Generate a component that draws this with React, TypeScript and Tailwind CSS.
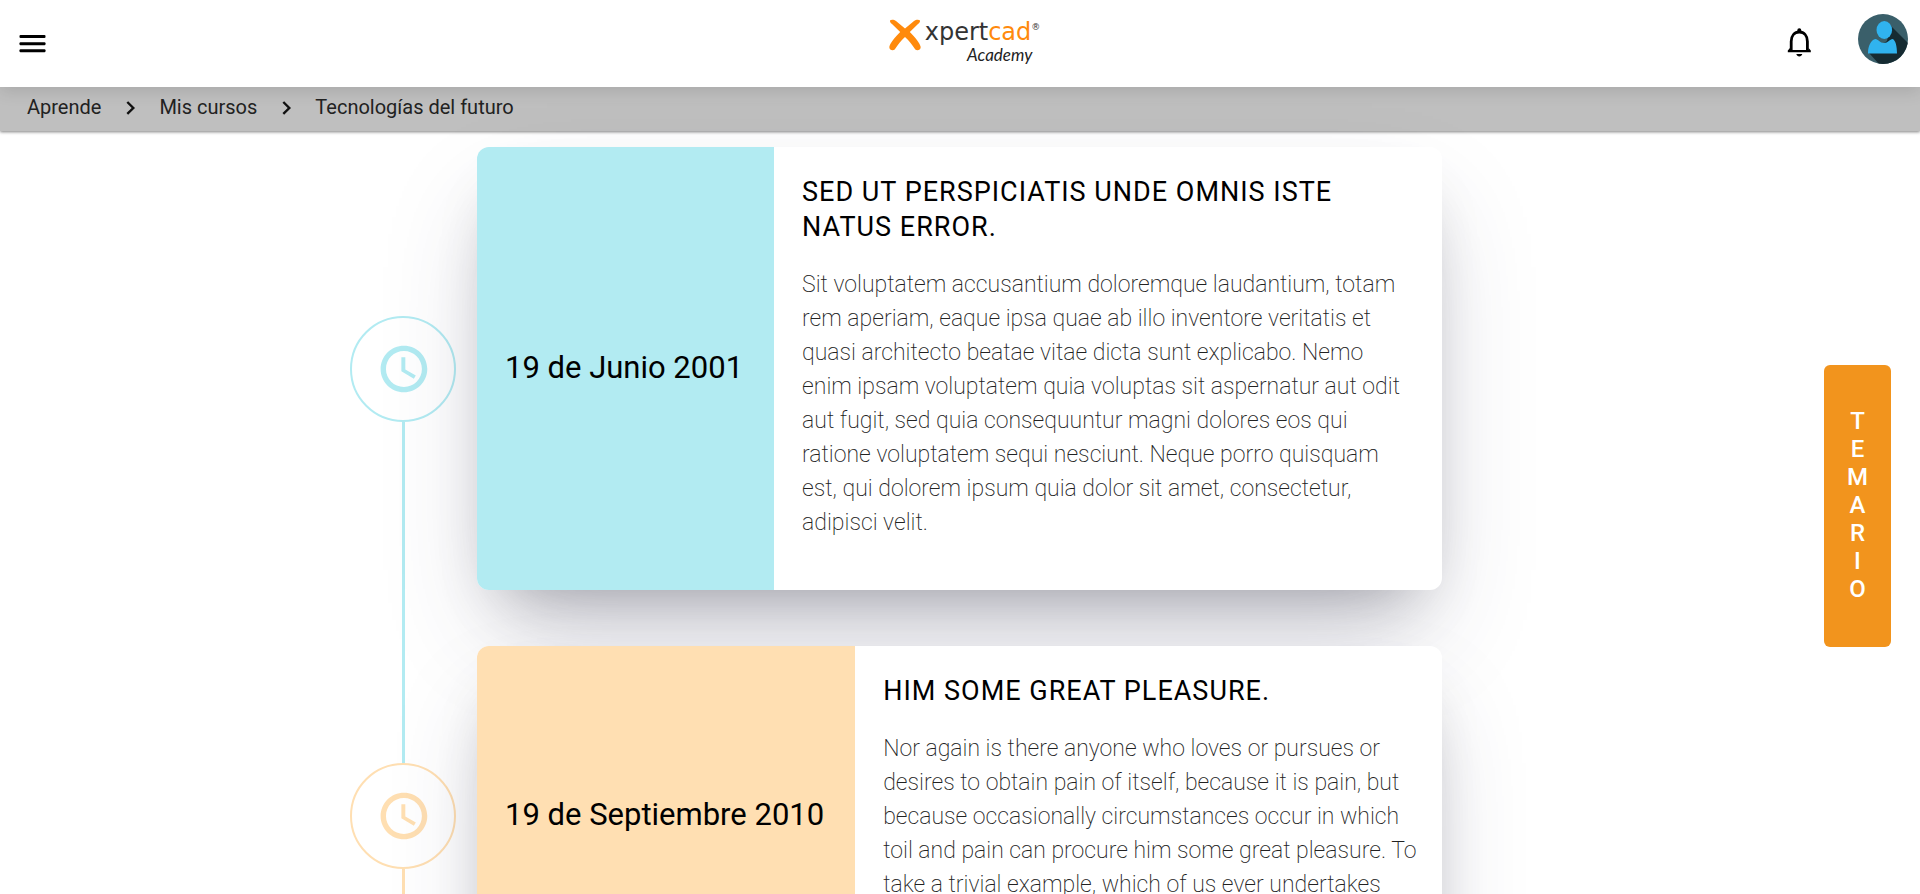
import React from "react";

type Tone = "cyan" | "orange";

interface Event {
  date: string;
  title: string;
  body: string;
  tone: Tone;
}

const events: Event[] = [
  {
    date: "19 de Junio 2001",
    title: "Sed ut perspiciatis unde omnis iste natus error.",
    body: "Sit voluptatem accusantium doloremque laudantium, totam rem aperiam, eaque ipsa quae ab illo inventore veritatis et quasi architecto beatae vitae dicta sunt explicabo. Nemo enim ipsam voluptatem quia voluptas sit aspernatur aut odit aut fugit, sed quia consequuntur magni dolores eos qui ratione voluptatem sequi nesciunt. Neque porro quisquam est, qui dolorem ipsum quia dolor sit amet, consectetur, adipisci velit.",
    tone: "cyan",
  },
  {
    date: "19 de Septiembre 2010",
    title: "Him some great pleasure.",
    body: "Nor again is there anyone who loves or pursues or desires to obtain pain of itself, because it is pain, but because occasionally circumstances occur in which toil and pain can procure him some great pleasure. To take a trivial example, which of us ever undertakes laborious physical exercise.",
    tone: "orange",
  },
];

const tones: Record<Tone, { fill: string; ring: string; icon: string }> = {
  cyan: { fill: "bg-[#b2ebf2]", ring: "border-[#b2ebf2]", icon: "text-[#b2ebf2]" },
  orange: { fill: "bg-[#ffdfb2]", ring: "border-[#ffdfb2]", icon: "text-[#ffdfb2]" },
};

function Clock({ className }: { className: string }) {
  return (
    <svg viewBox="-0.4 0 24 24" className={className} fill="currentColor" aria-hidden="true">
      <path d="M11.99 2C6.47 2 2 6.48 2 12s4.47 10 9.99 10C17.52 22 22 17.52 22 12S17.52 2 11.99 2zM12 19.700c-4.300 0-7.700-3.400-7.700-7.700s3.400-7.700 7.700-7.700 7.700 3.400 7.700 7.700-3.400 7.700-7.700 7.700zm.600-12.700H10.900v6l5.350 3.150.85-1.330-4.500-2.620z" />
    </svg>
  );
}

function Chevron() {
  return (
    <svg viewBox="-1 0 12 16" className="h-4 w-3" fill="none" stroke="#111" strokeWidth="2.4" aria-hidden="true">
      <path d="M2.300 3 8.300 9l-6 5.800" />
    </svg>
  );
}

function Logo() {
  return (
    <a href="#" aria-label="Xpertcad Academy" className="flex items-start gap-1 pl-[9px]">
      <svg viewBox="0 0 32 32" className="h-8 w-8" aria-hidden="true">
        <path
          d="M1 1.500C2 .3 5 .3 7 2L16 9.600 25 2C27 .3 30 .3 31 1.500 31.300 2.500 30.500 4 29 5L20.800 13C26 18.500 31 24 31.700 28 31.700 31.300 28 32 26.300 30.500 23 25.500 20 21.800 16 18 12 21.800 9 25.500 5.700 30.500 4 32 .3 31.300.3 28 1 24 6 18.500 11.200 13L3 5C1.500 4 .700 2.500 1 1.500Z"
          fill="#ff8a0c"
        />
      </svg>
      <span className="flex flex-col items-end">
        <span className="flex items-start font-['DejaVu_Sans',sans-serif] text-[24px] leading-[26px] text-[#333]">
          <span>xpert</span>
          <span className="text-[#ff8a0c]">cad</span>
          <span className="text-[9px] leading-[16px]">®</span>
        </span>
        <span className="pr-2 font-['Lato',sans-serif] text-[17px] leading-[20px] text-[#222] italic">
          Academy
        </span>
      </span>
    </a>
  );
}

function Header() {
  return (
    <header className="relative z-10 grid h-[87px] grid-cols-3 items-start bg-white shadow-[0_4px_16px_rgba(0,0,0,0.12)]">
      <button type="button" aria-label="Menú" className="mt-[28px] ml-[18px] h-8 w-8 justify-self-start">
        <svg viewBox="0 0 32 32" className="h-8 w-8" fill="#000" aria-hidden="true">
          <rect x="1.500" y="7" width="26" height="3" rx="1" />
          <rect x="1.500" y="14.200" width="26" height="3" rx="1" />
          <rect x="1.500" y="21.300" width="26" height="3" rx="1" />
        </svg>
      </button>
      <div className="mt-[19px] justify-self-center">
        <Logo />
      </div>
      <div className="mr-3 flex items-start gap-10 justify-self-end">
        <button type="button" aria-label="Notificaciones" className="mt-6 h-9 w-9">
          <svg viewBox="0 0 36 36" className="h-9 w-9" fill="none" stroke="#000" aria-hidden="true">
            <path d="M9.200 26.500V17.500C9.200 11.700 12.500 8 17.300 8s8.100 3.700 8.100 9.500v9" strokeWidth="2.800" />
            <path d="M15.300 7.500V6.300a2 2 0 0 1 4 0v1.200ZM8 24l-2.200 2.600v1.600h23v-1.600L26.600 24v2H8ZM14.300 30h6c-.4 1.600-1.500 2.400-3 2.400s-2.600-.8-3-2.400Z" fill="#000" stroke="none" />
          </svg>
        </button>
        <button type="button" aria-label="Perfil" className="mt-3.5 h-[50px] w-[50px] overflow-hidden rounded-full">
          <svg viewBox="0 0 50 50" className="h-full w-full" aria-hidden="true">
            <rect width="50" height="50" fill="#3a5f6a" />
            <path d="M32 11 50 29v21H21L11 39l18-12Z" fill="#162b32" />
            <ellipse cx="26.300" cy="16" rx="7.800" ry="9" fill="#30b3ef" />
            <path d="M10 39.500c0-8 3-13.500 7.500-14.500 2.500 0 4.500 4 8.500 4s6-4 8.500-4c3 1 4.500 7 4.500 14.500Z" fill="#30b3ef" />
          </svg>
        </button>
      </div>
    </header>
  );
}

function Breadcrumb() {
  return (
    <nav
      aria-label="Ruta"
      className="flex h-[44px] items-center gap-[23px] bg-[#bfbfbf] px-[27px] pb-1 text-[20px] leading-[28px] text-[#222] shadow-[0_1px_3px_rgba(0,0,0,0.5)]"
    >
      <a href="#">Aprende</a>
      <Chevron />
      <a href="#">Mis cursos</a>
      <Chevron />
      <a href="#">Tecnologías del futuro</a>
    </nav>
  );
}

function TimelineRow({ event, previous }: { event: Event; previous?: Event }) {
  const tone = tones[event.tone];
  return (
    <li>
      {previous && (
        <div className="flex h-14 w-[106px] justify-center">
          <div className={`w-[3px] ${tones[previous.tone].fill}`} />
        </div>
      )}
      <div className="flex gap-[21px]">
        <div className="flex w-[106px] shrink-0 flex-col items-center">
          <div className={`w-[3px] flex-1 ${previous ? tones[previous.tone].fill : ""}`} />
          <div className={`flex h-[106px] w-[106px] items-center justify-center rounded-full border-2 bg-white ${tone.ring}`}>
            <Clock className={`h-14 w-14 ${tone.icon}`} />
          </div>
          <div className={`w-[3px] flex-1 ${tone.fill}`} />
        </div>
        <article className="flex flex-1 overflow-hidden rounded-xl bg-white shadow-[0_50px_100px_-20px_rgba(50,50,93,0.25),0_30px_60px_-30px_rgba(0,0,0,0.3)]">
          <time className={`flex shrink-0 items-center pr-[31px] pb-0.5 pl-[28px] text-[31px] leading-[40px] text-black ${tone.fill}`}>
            {event.date}
          </time>
          <div className="pt-[28px] pr-[25px] pb-[50px] pl-[28px]">
            <h2 className="text-[27px] leading-[35px] tracking-[1px] text-black uppercase">{event.title}</h2>
            <p className="mt-[23px] text-[23px] leading-[34px] font-extralight text-[#222]">{event.body}</p>
          </div>
        </article>
      </div>
    </li>
  );
}

export default function App() {
  return (
    <div className="min-h-screen bg-white font-['Roboto',sans-serif]">
      <Header />
      <Breadcrumb />
      <main className="px-6 pt-4">
        <ol className="mx-auto w-full max-w-[1220px] pr-[128px]">
          {events.map((event, i) => (
            <TimelineRow key={event.date} event={event} previous={events[i - 1]} />
          ))}
        </ol>
      </main>
      <button
        type="button"
        aria-label="Temario"
        className="fixed top-[365px] right-[29px] flex w-[67px] flex-col items-center rounded-md bg-[#f2941d] pt-[42px] pb-[44px] text-[24px] leading-[28px] font-medium text-white"
      >
        {"TEMARIO".split("").map((letter, i) => (
          <span key={i}>{letter}</span>
        ))}
      </button>
    </div>
  );
}
